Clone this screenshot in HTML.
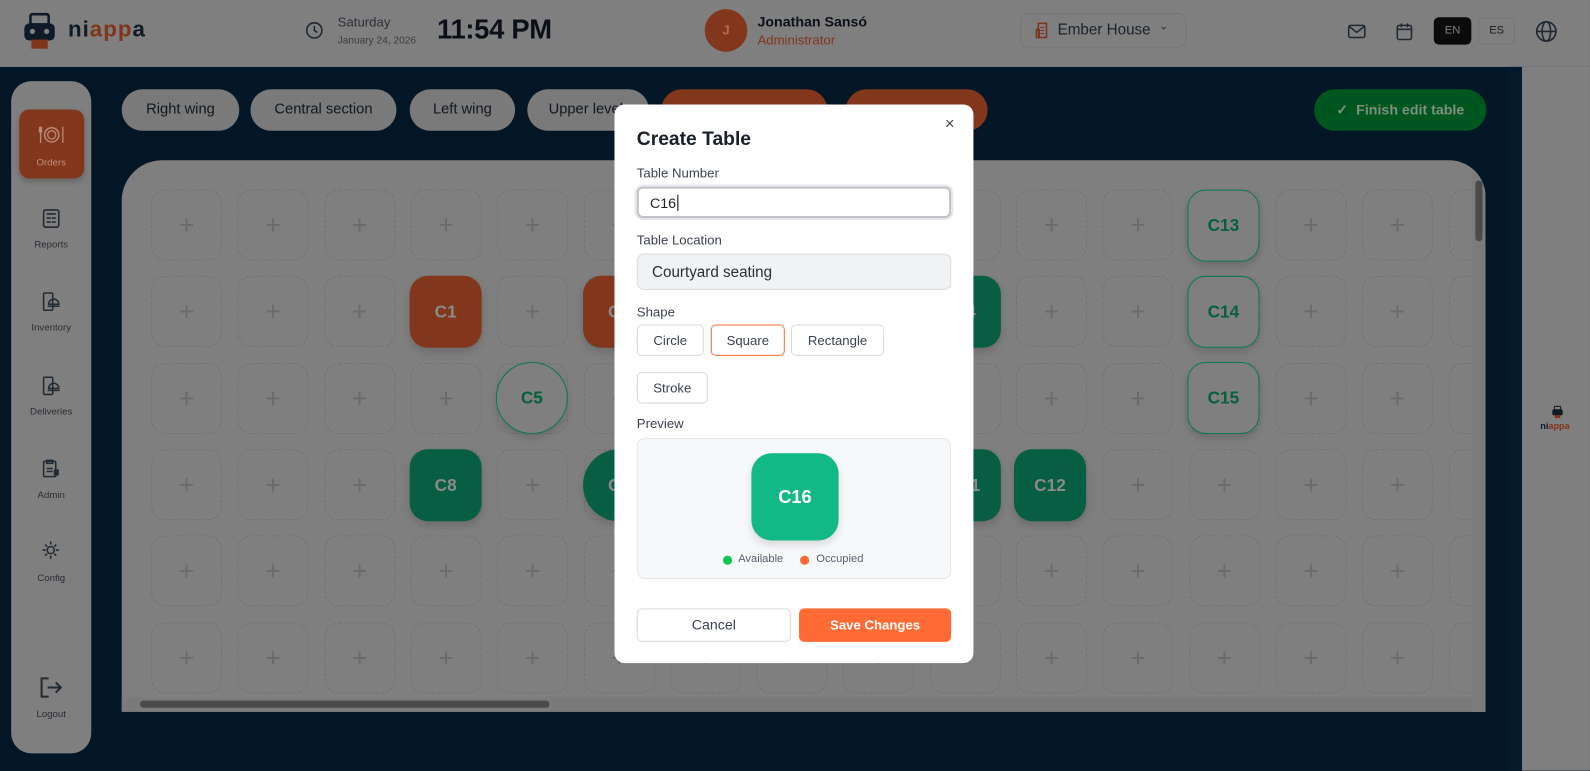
<!DOCTYPE html>
<html><head><meta charset="utf-8"><style>
*{box-sizing:border-box;margin:0;padding:0}
html,body{width:1590px;height:770px;overflow:hidden;background:#021626;font-family:"Liberation Sans",sans-serif}
#w{position:absolute;left:0;top:0;width:1568px;height:760px;transform:scale(1.014);transform-origin:0 0}
.a{position:absolute}
#hdr{left:0;top:0;width:1568px;height:66px;background:#7f7f7f;border-bottom:1px solid #767676}
#rp{left:1501px;top:66px;width:67px;height:694px;background:#7f7f7f}
#side{left:11px;top:80px;width:79px;height:663px;background:#7f7f7f;border-radius:20px}
.nav{position:absolute;left:0;width:79px;text-align:center;font-size:9.5px;color:#2a2d33}
.pill{position:absolute;top:88px;height:41px;border-radius:21px;background:#7a7a7a;color:#111720;font-size:14.5px;line-height:41px;text-align:center}
#grid{left:120px;top:158px;width:1345px;height:544px;background:#7f7f7f;border-radius:40px 36px 0 0;overflow:hidden}
.c{position:absolute;width:70px;height:70px;border:1px dashed #727272;border-radius:14px}
.c:after{content:"+";position:absolute;left:0;right:0;top:19px;text-align:center;font-size:26px;color:#6a6a6a;font-weight:300}
.t{position:absolute;width:71px;height:71px;border-radius:18px;color:#8a8a8a;font-weight:bold;font-size:17px;line-height:71px;text-align:center;box-shadow:0 4px 8px rgba(0,0,0,.15)}
.o{background:#82361b}.g{background:#075e42}
.s{background:#7f7f7f;border:1px solid #0b7a4e;color:#07603c;line-height:69px}
#modal{left:606px;top:103px;width:354px;height:551px;background:#fff;border-radius:10px}
.lbl{position:absolute;left:22px;font-size:13px;color:#3b4250}
.btn{position:absolute;height:31px;border:1px solid #d7dae0;border-radius:5px;font-size:13px;color:#3b4250;text-align:center;line-height:29px;background:#fff}
</style></head><body><div id="w">
<div id="hdr" class="a">
  <svg class="a" style="left:22px;top:12px" width="34" height="38" viewBox="0 0 34 38"><rect x="8" y="2" width="18" height="10" rx="2" fill="none" stroke="#0e1a25" stroke-width="2.5"/><rect x="2" y="11" width="30" height="17" rx="5" fill="#0e1a25"/><circle cx="10" cy="19" r="2.6" fill="#7f7f7f"/><circle cx="24" cy="19" r="2.6" fill="#7f7f7f"/><rect x="9" y="27" width="16" height="9" fill="#82341a"/></svg>
  <div class="a" style="left:67px;top:16px;font-size:22px;font-weight:bold;letter-spacing:1px;color:#0e1a25">ni<span style="color:#82341a">app</span>a</div>
  <svg class="a" style="left:301px;top:21px" width="18" height="18" viewBox="0 0 18 18"><circle cx="9" cy="9" r="7.5" fill="none" stroke="#1e2630" stroke-width="1.5"/><path d="M9 4.5V9l3 2" fill="none" stroke="#1e2630" stroke-width="1.5"/></svg>
  <div class="a" style="left:333px;top:14px;font-size:13px;color:#2c3038">Saturday</div>
  <div class="a" style="left:333px;top:35px;font-size:10px;color:#3a3d42">January 24, 2026</div>
  <div class="a" style="left:431px;top:14px;font-size:27px;font-weight:bold;color:#0b1018;letter-spacing:-0.3px">11:54 PM</div>
  <div class="a" style="left:695px;top:9px;width:42px;height:42px;border-radius:50%;background:#82361b;color:#b07050;text-align:center;line-height:42px;font-size:13px;font-weight:bold">J</div>
  <div class="a" style="left:747px;top:13px;font-size:14px;font-weight:bold;color:#0b1018">Jonathan Sansó</div>
  <div class="a" style="left:747px;top:32px;font-size:13px;color:#82361b">Administrator</div>
  <div class="a" style="left:1006px;top:13px;width:164px;height:34px;border:1px solid #767676;border-radius:8px"></div>
  <svg class="a" style="left:1021px;top:22px" width="14" height="16" viewBox="0 0 14 16"><rect x="3" y="1" width="8" height="14" fill="none" stroke="#7a3218" stroke-width="1.5"/><rect x="1" y="7" width="3" height="8" fill="none" stroke="#7a3218" stroke-width="1.3"/><path d="M5 5h4M5 8h4M5 11h4" stroke="#7a3218"/></svg>
  <div class="a" style="left:1043px;top:21px;font-size:15px;color:#1c222c">Ember House</div>
  <div class="a" style="left:1143px;top:19px;font-size:11px;color:#333">⌄</div>
  <svg class="a" style="left:1329px;top:23px" width="18" height="16" viewBox="0 0 18 16"><rect x="1" y="2" width="16" height="12" rx="2" fill="none" stroke="#1e2630" stroke-width="1.5"/><path d="M1.5 3l7.5 6 7.5-6" fill="none" stroke="#1e2630" stroke-width="1.5"/></svg>
  <svg class="a" style="left:1377px;top:22px" width="16" height="18" viewBox="0 0 16 18"><rect x="1" y="3" width="14" height="14" rx="2" fill="none" stroke="#1e2630" stroke-width="1.5"/><path d="M1 7h14M5 1v4M11 1v4" stroke="#1e2630" stroke-width="1.5"/></svg>
  <div class="a" style="left:1414px;top:17px;width:37px;height:27px;background:#0b0b0b;border-radius:5px;color:#7f7f7f;font-size:11px;text-align:center;line-height:27px">EN</div>
  <div class="a" style="left:1458px;top:17px;width:36px;height:27px;border:1px solid #767676;border-radius:5px;color:#1a1a1a;font-size:11px;text-align:center;line-height:25px">ES</div>
  <svg class="a" style="left:1514px;top:20px" width="22" height="22" viewBox="0 0 22 22"><circle cx="11" cy="11" r="9.5" fill="none" stroke="#1e2630" stroke-width="1.6"/><ellipse cx="11" cy="11" rx="4.2" ry="9.5" fill="none" stroke="#1e2630" stroke-width="1.5"/><path d="M1.5 11h19" stroke="#1e2630" stroke-width="1.5"/></svg>
</div>
<div class="a" style="left:1487px;top:66px;width:14px;height:694px;background:#021a2c"></div>
<div id="rp" class="a">
  <svg class="a" style="left:28px;top:334px" width="14" height="13" viewBox="0 0 34 38"><rect x="8" y="2" width="18" height="10" rx="2" fill="none" stroke="#0e1a25" stroke-width="3"/><rect x="2" y="11" width="30" height="17" rx="5" fill="#0e1a25"/><rect x="9" y="27" width="16" height="9" fill="#82341a"/></svg>
  <div class="a" style="left:18px;top:349px;font-size:9px;font-weight:bold;color:#0e1a25">ni<span style="color:#82341a">appa</span></div>
</div>
<div id="side" class="a">
  <div class="a" style="left:8px;top:28px;width:64px;height:68px;background:#82361b;border-radius:10px;box-shadow:0 3px 6px rgba(0,0,0,.2)"></div>
  <svg class="a" style="left:27px;top:44px" width="26" height="18" viewBox="0 0 26 18"><circle cx="13" cy="9" r="7" fill="none" stroke="#b88a78" stroke-width="1.5"/><circle cx="13" cy="9" r="4" fill="none" stroke="#b88a78" stroke-width="1.3"/><path d="M2 1v16M24 1v16M1 1v5h2V1" fill="none" stroke="#b88a78" stroke-width="1.3"/></svg>
  <div class="nav" style="top:75px;color:#c09080">Orders</div>
  <svg class="a" style="left:31px;top:126px" width="17" height="19" viewBox="0 0 17 19"><rect x="1" y="1" width="15" height="17" rx="2" fill="none" stroke="#222a33" stroke-width="1.6"/><path d="M4 5h9M4 9h4M9 9h4M4 13h4M9 13h4" stroke="#222a33" stroke-width="1.6"/></svg>
  <div class="nav" style="top:156px">Reports</div>
  <svg class="a" style="left:31px;top:208px" width="17" height="19" viewBox="0 0 17 19"><rect x="1" y="1" width="9" height="17" rx="1" fill="none" stroke="#222a33" stroke-width="1.5"/><path d="M6 12a5 5 0 0 1 10 0zM5 14h12" fill="none" stroke="#222a33" stroke-width="1.5"/></svg>
  <div class="nav" style="top:238px">Inventory</div>
  <svg class="a" style="left:31px;top:291px" width="17" height="19" viewBox="0 0 17 19"><rect x="1" y="1" width="9" height="17" rx="1" fill="none" stroke="#222a33" stroke-width="1.5"/><path d="M6 12a5 5 0 0 1 10 0zM5 14h12" fill="none" stroke="#222a33" stroke-width="1.5"/></svg>
  <div class="nav" style="top:321px">Deliveries</div>
  <svg class="a" style="left:31px;top:372px" width="17" height="19" viewBox="0 0 17 19"><rect x="1" y="3" width="12" height="15" rx="1" fill="none" stroke="#222a33" stroke-width="1.5"/><path d="M4 2h6v3H4zM4 10h6M4 13h6" fill="none" stroke="#222a33" stroke-width="1.5"/><rect x="11" y="11" width="5" height="6" fill="#222a33"/></svg>
  <div class="nav" style="top:403px">Admin</div>
  <svg class="a" style="left:30px;top:453px" width="19" height="19" viewBox="0 0 19 19"><circle cx="9" cy="9.5" r="3.5" fill="none" stroke="#222a33" stroke-width="1.5"/><path d="M9 1v3M9 15v3M1 9.5h3M14 9.5h3M3.5 4l2 2M12.5 13l2 2M3.5 15l2-2M12.5 6l2-2" stroke="#222a33" stroke-width="1.6"/></svg>
  <div class="nav" style="top:485px">Config</div>
  <svg class="a" style="left:28px;top:587px" width="23" height="22" viewBox="0 0 23 22"><path d="M9 2H2v18h7M8 11h13M16 6l5 5-5 5" fill="none" stroke="#222a33" stroke-width="2"/></svg>
  <div class="nav" style="top:619px">Logout</div>
</div>
<div class="pill" style="left:120px;width:116px">Right wing</div>
<div class="pill" style="left:247px;width:144px">Central section</div>
<div class="pill" style="left:404px;width:104px">Left wing</div>
<div class="pill" style="left:520px;width:120px;text-align:left;padding-left:21px">Upper level</div>
<div class="pill" style="left:652px;width:164px;background:#82361b"></div>
<div class="pill" style="left:834px;width:140px;background:#82361b"></div>
<div class="pill" style="left:1296px;width:170px;background:#00561f;color:#7f8f80;font-weight:bold;font-size:14px">✓&nbsp; Finish edit table</div>
<div id="grid" class="a">
<div id="cells"></div>
<div class="t o" style="left:284px;top:114px">C1</div>
<div class="t o" style="left:455px;top:114px">C2</div>
<div class="t g" style="left:796px;top:114px">C4</div>
<div class="t s" style="left:369px;top:199px;border-radius:50%">C5</div>
<div class="t g" style="left:284px;top:285px">C8</div>
<div class="t g" style="left:455px;top:285px;border-radius:50%">C9</div>
<div class="t g" style="left:796px;top:285px">C11</div>
<div class="t g" style="left:880px;top:285px">C12</div>
<div class="t s" style="left:1051px;top:29px">C13</div>
<div class="t s" style="left:1051px;top:114px">C14</div>
<div class="t s" style="left:1051px;top:199px">C15</div>
<div class="a" style="left:1332px;top:0;width:13px;height:544px;background:#7b7b7b"></div>
<div class="a" style="left:1335px;top:20px;width:7px;height:60px;background:#4a4a4a;border-radius:4px"></div>
<div class="a" style="left:0;top:530px;width:1345px;height:14px;background:#7b7b7b"></div>
<div class="a" style="left:18px;top:533px;width:404px;height:7px;background:#4a4a4a;border-radius:4px"></div>
</div>
<div id="modal" class="a">
  <div class="a" style="left:22px;top:24px;font-size:19px;font-weight:bold;color:#1a1f29">Create Table</div>
  <div class="a" style="left:326px;top:11px;font-size:16px;color:#444">×</div>
  <div class="lbl" style="top:60px">Table Number</div>
  <div class="a" style="left:22px;top:81px;width:310px;height:31px;border:2px solid #bfc2c7;border-radius:6px;box-shadow:0 0 0 2px #e5e6e8;font-size:14px;color:#222;padding:6px 11px">C16<span style="border-left:1px solid #000;margin-left:1px"></span></div>
  <div class="lbl" style="top:126px">Table Location</div>
  <div class="a" style="left:22px;top:147px;width:310px;height:36px;background:#f1f2f4;border:1px solid #d9dce1;border-radius:7px;font-size:15px;color:#2a2f38;padding:9px 14px">Courtyard seating</div>
  <div class="lbl" style="top:197px">Shape</div>
  <div class="btn" style="left:22px;top:217px;width:66px">Circle</div>
  <div class="btn" style="left:95px;top:217px;width:73px;border-color:#ff6b35">Square</div>
  <div class="btn" style="left:174px;top:217px;width:92px">Rectangle</div>
  <div class="btn" style="left:22px;top:264px;width:70px">Stroke</div>
  <div class="lbl" style="top:307px">Preview</div>
  <div class="a" style="left:22px;top:329px;width:310px;height:139px;background:#f7f8fa;border:1px solid #e4e6ea;border-radius:8px">
    <div class="a" style="left:112px;top:14px;width:86px;height:86px;background:#12b886;border-radius:20px;color:#fff;font-weight:bold;font-size:18px;text-align:center;line-height:86px;box-shadow:0 4px 8px rgba(0,0,0,.12)">C16</div>
    <div class="a" style="left:84px;top:115px;width:9px;height:9px;border-radius:50%;background:#0fc653"></div>
    <div class="a" style="left:99px;top:112px;font-size:11px;color:#59606c">Available</div>
    <div class="a" style="left:160px;top:115px;width:9px;height:9px;border-radius:50%;background:#ff6b35"></div>
    <div class="a" style="left:176px;top:112px;font-size:11px;color:#59606c">Occupied</div>
  </div>
  <div class="btn" style="left:22px;top:497px;width:152px;height:33px;line-height:31px;font-size:14px">Cancel</div>
  <div class="btn" style="left:182px;top:497px;width:150px;height:33px;line-height:33px;border:none;background:#ff6b35;color:#fff;font-weight:bold;font-size:13px">Save Changes</div>
</div>
</div>
<script>
var h='';for(var r=0;r<6;r++)for(var k=0;k<16;k++)h+='<div class="c" style="left:'+(29+k*85.3).toFixed(1)+'px;top:'+(29+r*85.3).toFixed(1)+'px"></div>';
document.getElementById('cells').innerHTML=h;
</script>
</body></html>
